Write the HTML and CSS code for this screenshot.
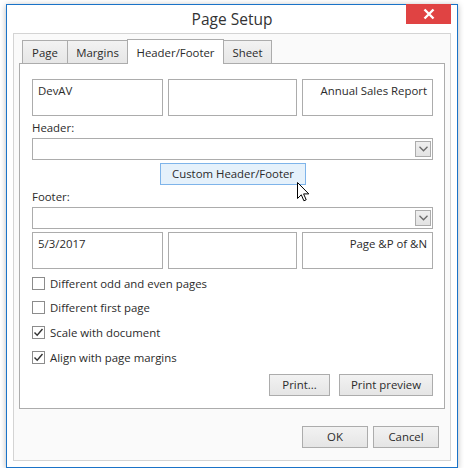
FILE: index.html
```html
<!DOCTYPE html>
<html>
<head>
<meta charset="utf-8">
<link rel="stylesheet" href="styles.css">
</head>
<body>
<div class="window">
  <div class="titlebar">
    <div class="title">Page Setup</div>
    <div class="close">
      <svg width="12" height="12" viewBox="0 0 12 12"><path d="M1.5 1.5 L10.5 10.5 M10.5 1.5 L1.5 10.5" stroke="#fff" stroke-width="2.4" fill="none"/></svg>
    </div>
  </div>
  <div class="frame">
    <div class="tabs">
      <div class="tab t-page">Page</div>
      <div class="tab t-margins">Margins</div>
      <div class="tab t-hf active">Header/Footer</div>
      <div class="tab t-sheet">Sheet</div>
    </div>
    <div class="panel">
      <div class="boxes">
        <div class="box">DevAV</div>
        <div class="box"></div>
        <div class="box right">Annual Sales Report</div>
      </div>
      <div class="label">Header:</div>
      <div class="combo"><div class="drop"><svg width="9" height="6" viewBox="0 0 9 6"><path d="M0.5 0.8 L4.5 4.8 L8.5 0.8" stroke="#6a6a6a" stroke-width="1.3" fill="none"/></svg></div></div>
      <div class="custom-row"><div class="btn custom">Custom Header/Footer</div></div>
      <div class="label">Footer:</div>
      <div class="combo"><div class="drop"><svg width="9" height="6" viewBox="0 0 9 6"><path d="M0.5 0.8 L4.5 4.8 L8.5 0.8" stroke="#6a6a6a" stroke-width="1.3" fill="none"/></svg></div></div>
      <div class="boxes footer-boxes">
        <div class="box">5/3/2017</div>
        <div class="box"></div>
        <div class="box right">Page &amp;P of &amp;N</div>
      </div>
      <div class="checks">
        <div class="check"><span class="cb"></span>Different odd and even pages</div>
        <div class="check"><span class="cb"></span>Different first page</div>
        <div class="check"><span class="cb"><svg width="11" height="11" viewBox="0 0 11 11"><path d="M1.5 5.5 L4.2 8.3 L9.5 2" stroke="#333" stroke-width="1.4" fill="none"/></svg></span>Scale with document</div>
        <div class="check"><span class="cb"><svg width="11" height="11" viewBox="0 0 11 11"><path d="M1.5 5.5 L4.2 8.3 L9.5 2" stroke="#333" stroke-width="1.4" fill="none"/></svg></span>Align with page margins</div>
      </div>
      <div class="print-row">
        <div class="btn print">Print...</div>
        <div class="btn preview">Print preview</div>
      </div>
    </div>
    <div class="footer-row">
      <div class="btn ok">OK</div>
      <div class="btn cancel">Cancel</div>
    </div>
  </div>
  <svg class="cursor" width="13" height="20" viewBox="0 0 13 20"><path d="M0.5 0.5 L0.5 16.5 L4.3 12.8 L6.9 18.8 L9.2 17.8 L6.6 11.9 L11.8 11.9 Z" fill="#fff" stroke="#000" stroke-width="1" stroke-linejoin="miter"/></svg>
</div>
</body>
</html>
```
FILE: styles.css
```css
* { box-sizing: border-box; }
html, body { margin: 0; padding: 0; background: #fff; }
body {
  font-family: "Open Sans", "Noto Sans", sans-serif;
  font-size: 11.4px;
  color: #2b2b2b;
}
.window {
  position: relative;
  margin: 4px 0 0 6px;
  width: 452px;
  height: 464px;
  border: 1px solid #1a73c8;
  background: #fff;
  box-shadow: 0 1px 6px rgba(0,0,0,0.28);
  display: flex;
  flex-direction: column;
}
.titlebar {
  height: 28px;
  display: flex;
  align-items: center;
  justify-content: center;
  position: relative;
}
.title {
  font-size: 15.5px;
  color: #333;
}
.close {
  position: absolute;
  right: 6px;
  top: -1px;
  width: 45px;
  height: 20px;
  background: #e04343;
  display: flex;
  align-items: center;
  justify-content: center;
}
.frame {
  margin: 0 6px;
  height: 428px;
  border: 1px solid #d4d4d4;
  background: #fafafa;
  padding: 5px 5px 0 5px;
  display: flex;
  flex-direction: column;
}
.tabs {
  display: flex;
  align-items: flex-end;
  height: 24px;
  padding-left: 3px;
  position: relative;
  z-index: 1;
}
.tab {
  height: 23px;
  border: 1px solid #acacac;
  border-bottom: none;
  background: linear-gradient(#f2f2f2, #e6e6e6);
  display: flex;
  align-items: center;
  justify-content: center;
  margin-right: -1px;
  padding-top: 1px;
}
.tab.active {
  height: 25px;
  background: #fff;
  margin-bottom: -1px;
  padding-top: 1px;
  position: relative;
}
.t-page { width: 46px; }
.t-margins { width: 61px; }
.t-hf { width: 97px; }
.t-sheet { width: 49px; }
.panel {
  height: 346px;
  border: 1px solid #acacac;
  background: #fff;
  padding: 15px 11px 0 12px;
  display: flex;
  flex-direction: column;
}
.boxes {
  display: grid;
  grid-template-columns: 131px 1fr 131px;
  column-gap: 5px;
}
.box {
  height: 37px;
  border: 1px solid #acacac;
  padding: 3px 5px;
  line-height: 16px;
}
.box.right { text-align: right; }
.label {
  height: 22px;
  padding-top: 4px;
  line-height: 16px;
}
.combo {
  height: 22px;
  border: 1px solid #acacac;
  display: flex;
  justify-content: flex-end;
  align-items: center;
  padding-right: 1px;
}
.drop {
  width: 16px;
  height: 16px;
  border: 1px solid #acacac;
  background: linear-gradient(#efefef, #e3e3e3);
  display: flex;
  align-items: center;
  justify-content: center;
}
.btn {
  height: 22px;
  border: 1px solid #acacac;
  background: linear-gradient(#f2f2f2, #e5e5e5);
  display: flex;
  align-items: center;
  justify-content: center;
  line-height: 16px;
}
.custom-row {
  display: flex;
  justify-content: center;
  padding-top: 3px;
  padding-left: 1px;
}
.btn.custom {
  width: 146px;
  background: #e5f1fb;
  border-color: #7eb4ea;
}
.footer-boxes { margin-top: 3px; }
.checks {
  margin-top: 2px;
  display: flex;
  flex-direction: column;
}
.check {
  height: 24.6px;
  display: flex;
  align-items: center;
}
.cb {
  width: 13px;
  height: 13px;
  border: 1px solid #8c8c8c;
  background: #fff;
  margin-right: 5px;
  display: flex;
  align-items: center;
  justify-content: center;
}
.print-row {
  margin-top: auto;
  margin-bottom: 12px;
  display: flex;
  justify-content: flex-end;
  gap: 9px;
}
.btn.print { width: 61px; }
.btn.preview { width: 94px; }
.footer-row {
  display: flex;
  justify-content: flex-end;
  gap: 5px;
  padding: 17px 6px 0 0;
}
.btn.ok, .btn.cancel { width: 66px; }
.cursor {
  position: absolute;
  left: 290px;
  top: 177px;
}
```
